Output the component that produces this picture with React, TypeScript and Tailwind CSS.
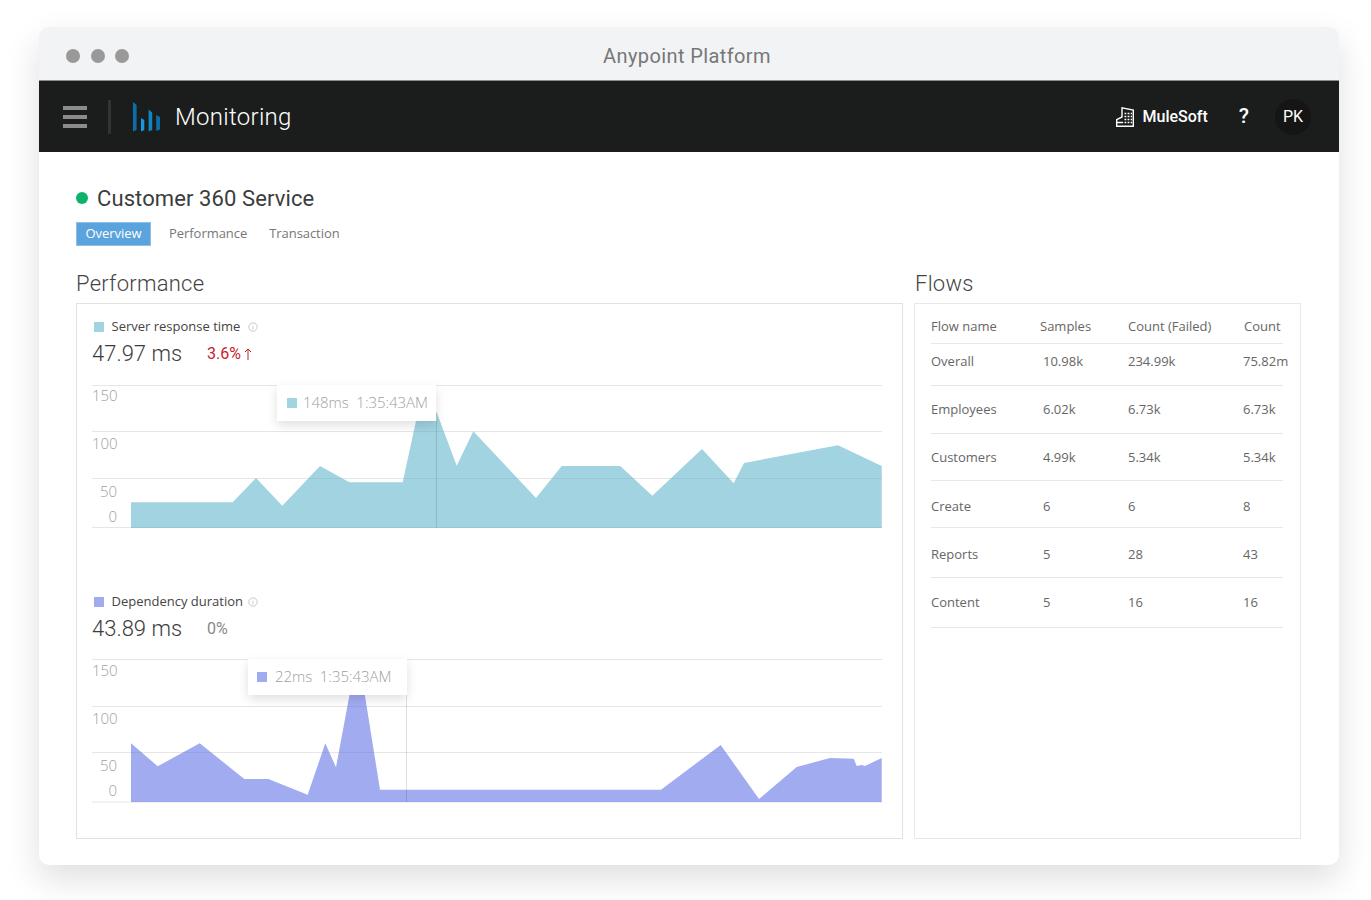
import React from 'react';

const din = "font-['Roboto',sans-serif]";
const body = "font-['Open_Sans',sans-serif]";

const serverPoints = '131,528 131,502.3 232.7,502.3 256,478 282.3,505.7 320,466 349.3,482.3 402.7,482.3 416,421 418,412 436.7,412.3 456.7,465.7 473.3,431.3 536,498 561.7,466 620.3,466 652.3,495.7 702,449 733.7,483.3 744,463 838,445.3 881.7,466 881.7,528';
const depPoints = '131,802 131,743.3 157.7,766.3 199.7,743.3 244.3,779 268.3,779 307.7,794.7 325.3,743.3 336,767.3 349.3,696 352,680 362,680 365,696 380,789.7 661,789.7 720.7,745 759,799 796.7,767 830,758 853.7,758.7 856.7,766 861.7,765 865,766 881.7,758 881.7,802';

function InfoIcon() {
  return (
    <svg width="10" height="10" viewBox="0 0 10 10" fill="none" stroke="#b5b5b5" strokeWidth="0.7">
      <circle cx="5" cy="5" r="4.2" />
      <path d="M5 4.2V7.5M5 2.5V3.3" />
    </svg>
  );
}

function UpArrow() {
  return (
    <svg className="ml-[3px]" width="8" height="12" viewBox="0 0 8 12" fill="none" stroke="#c8202d" strokeWidth="1">
      <path d="M4 12V1M1 4l3-3 3 3" />
    </svg>
  );
}

function ChartSection({
  label,
  value,
  delta,
  swatch,
  points,
  top,
  grid,
  cursor,
  axis,
  tip,
  tipClass,
  chartClass,
}: {
  label: string;
  value: string;
  delta: React.ReactNode;
  swatch: string;
  points: string;
  top: number;
  grid: number[];
  cursor: number;
  axis: number[];
  tip: string;
  tipClass: string;
  chartClass: string;
}) {
  const clipId = `area-${top}`;
  return (
    <div>
      <div className={`flex h-[18px] items-center pl-[2px] text-[13px] text-[#444] ${body}`}>
        <span className="h-[10px] w-[10px]" style={{ backgroundColor: swatch }} />
        <span className="ml-[7.5px] w-[136.5px]">{label}</span>
        <InfoIcon />
      </div>
      <div className={`mt-[3px] flex h-[28px] items-center ${din}`}>
        <span className="w-[115px] text-[22px] font-light text-[#3c3c3c]">{value}</span>
        <span className="flex items-center pt-[1px]">{delta}</span>
      </div>
      <div className={`relative h-[145px] w-[790px] ${chartClass}`}>
        <svg className="absolute inset-0" width="790" height="145" viewBox={`92 ${top} 790 145`}>
          <clipPath id={clipId}>
            <polygon points={points} />
          </clipPath>
          {grid.map((y) => (
            <line key={y} x1="92" x2="882" y1={y} y2={y} stroke="#e6e6e6" />
          ))}
          <polygon points={points} fill={swatch} />
          <g clipPath={`url(#${clipId})`}>
            {grid.map((y) => (
              <line key={y} x1="131" x2="882" y1={y} y2={y} stroke="#000" strokeOpacity="0.05" />
            ))}
          </g>
          <line x1={cursor} x2={cursor} y1={top + 36} y2={grid[3]} stroke="#000" strokeOpacity="0.12" />
        </svg>
        {axis.map((y, i) => (
          <span
            key={i}
            className={`absolute left-0 w-[25px] text-right text-[15px] leading-[20px] font-light text-[#a0a0a0] ${body}`}
            style={{ top: y }}
          >
            {['150', '100', '50', '0'][i]}
          </span>
        ))}
        <div
          className={`absolute top-0 flex h-[36px] w-[159px] items-center bg-white pb-[1px] text-[15px] font-light tracking-[-0.05px] whitespace-pre text-[#a0a0a0] shadow-[0_4px_10px_rgba(0,0,0,0.13)] ${body} ${tipClass}`}
        >
          <span className="h-[10px] w-[10px]" style={{ backgroundColor: swatch }} />
          {tip}
        </div>
      </div>
    </div>
  );
}

const rows = [
  { name: 'Overall', samples: '10.98k', failed: '234.99k', count: '75.82m', h: 'h-[42px] pb-[6px]' },
  { name: 'Employees', samples: '6.02k', failed: '6.73k', count: '6.73k', h: 'h-[48px]' },
  { name: 'Customers', samples: '4.99k', failed: '5.34k', count: '5.34k', h: 'h-[47px] pt-[2px]' },
  { name: 'Create', samples: '6', failed: '6', count: '8', h: 'h-[47px] pt-[5px]' },
  { name: 'Reports', samples: '5', failed: '28', count: '43', h: 'h-[50px] pt-[4px]' },
  { name: 'Content', samples: '5', failed: '16', count: '16', h: 'h-[50px]' },
];

export default function App() {
  return (
    <div className="h-[900px] w-full overflow-hidden bg-white pt-[27px] pl-[39px]">
      <div className="h-[838px] w-[1300px] overflow-hidden rounded-[10px] bg-white shadow-[0_14px_34px_rgba(0,0,0,0.13)]">
        {/* window chrome */}
        <div className="flex h-[54px] items-center border-b border-[#8c8e8d] bg-[#f2f3f5] pt-[4px] pl-[27px]">
          <div className="flex gap-[10.5px]">
            <span className="h-[14px] w-[14px] rounded-full bg-[#999]" />
            <span className="h-[14px] w-[14px] rounded-full bg-[#999]" />
            <span className="h-[14px] w-[14px] rounded-full bg-[#999]" />
          </div>
          <div className={`flex-1 pr-[94px] text-center text-[20px] tracking-[0.4px] text-[#777] ${din}`}>Anypoint Platform</div>
        </div>

        {/* nav */}
        <div className="flex h-[71px] items-center bg-[#1b1d1c] pr-[28px] pl-[24px] text-white">
          <div className="flex w-[24px] flex-col gap-[5px]">
            <span className="h-[4px] bg-[#8b8b8b]" />
            <span className="h-[4px] bg-[#8b8b8b]" />
            <span className="h-[4px] bg-[#8b8b8b]" />
          </div>
          <span className="mr-[22px] ml-[21px] h-[34px] w-[3px] bg-[#333]" />
          <svg width="28" height="30" viewBox="0 0 28 30">
            <polygon points="0,0 3.6,3 3.6,28 0,29.5" fill="#0c6ea8" />
            <polygon points="8,16 11.3,18 11.3,28 8,29.5" fill="#139ae2" />
            <polygon points="15.6,7.5 19.2,10.5 19.2,28 15.6,29.5" fill="#0f86c8" />
            <polygon points="23.2,13 27,15 27,27.5 23.2,29" fill="#0c6ea8" />
          </svg>
          <span className={`ml-[14px] text-[24px] font-light tracking-[0.3px] ${din}`}>Monitoring</span>
          <div className="flex-1" />
          <svg width="18" height="20" viewBox="0 0 18 20" fill="none" stroke="#fff" strokeWidth="1.4">
            <path d="M6 10V.9L17.3 3V19.3H.7V12.6L6 10Z" />
            <path d="M.7 15.5h6.4" />
            <path d="M8.5 6.5h1.8M11.6 6.5h1.8M14.7 6.5h1.4M8.5 9.5h1.8M11.6 9.5h1.8M14.7 9.5h1.4M8.5 12.5h1.8M11.6 12.5h1.8M14.7 12.5h1.4M8.5 15.5h1.8M11.6 15.5h1.8M14.7 15.5h1.4" strokeWidth="1.6" />
          </svg>
          <span className={`ml-[9px] text-[16px] font-medium ${din}`}>MuleSoft</span>
          <span className={`ml-[31px] text-[21px] font-medium ${din}`}>?</span>
          <span className={`ml-[26px] flex h-[36px] w-[36px] items-center justify-center rounded-full bg-[#141514] text-[16px] ${din}`}>PK</span>
        </div>

        {/* content */}
        <div className="px-[37px] pt-[33px]">
          <div className="flex h-[26px] items-center">
            <span className="h-[12px] w-[12px] rounded-full bg-[#0db36b]" />
            <h1 className={`ml-[9px] text-[22px] tracking-[0.1px] text-[#3c3c3c] ${din}`}>Customer 360 Service</h1>
          </div>
          <div className={`mt-[11px] flex h-[24px] items-center text-[13px] tracking-[-0.05px] text-[#777] ${body}`}>
            <span className="flex h-[24px] w-[75px] items-center justify-center border border-[#8fc0e8] bg-[#5ba3dc] text-white">Overview</span>
            <span className="ml-[18px]">Performance</span>
            <span className="ml-[22px]">Transaction</span>
          </div>

          <div className="mt-[24px] flex">
            <div className="w-[827px]">
              <h2 className={`h-[28px] text-[22px] leading-[28px] font-light tracking-[0.25px] text-[#444] ${din}`}>Performance</h2>
              <div className="mt-[5px] h-[536px] border border-[#e2e2e2] px-[15px] pt-[14px]">
                <ChartSection
                  label="Server response time"
                  value="47.97 ms"
                  delta={<><span className="text-[16px] text-[#c8202d]">3.6%</span><UpArrow /></>}
                  swatch="#a1d3e1"
                  points={serverPoints}
                  top={385}
                  grid={[385.5, 431.5, 478.5, 527.5]}
                  cursor={436.5}
                  axis={[0, 48, 96, 121]}
                  tip="148ms  1:35:43AM"
                  tipClass="left-[185px] gap-[6px] pl-[10px]"
                  chartClass="mt-[18px]"
                />
                <div className="h-[63px]" />
                <ChartSection
                  label="Dependency duration"
                  value="43.89 ms"
                  delta={<span className="text-[16px] text-[#888]">0%</span>}
                  swatch="#a1abf0"
                  points={depPoints}
                  top={659}
                  grid={[659.5, 706.5, 752.5, 802]}
                  cursor={406.5}
                  axis={[1, 49, 96, 121]}
                  tip="22ms  1:35:43AM"
                  tipClass="left-[156px] gap-[8px] pl-[9px]"
                  chartClass="mt-[17px]"
                />
              </div>
            </div>

            <div className="ml-[11px] w-[387px]">
              <h2 className={`h-[28px] pl-[1px] text-[22px] leading-[28px] font-light tracking-[0.25px] text-[#444] ${din}`}>Flows</h2>
              <div className={`mt-[5px] h-[536px] border border-[#e8e8e8] pr-[17px] pl-[16px] text-[13px] text-[#666] ${body}`}>
                <div className="grid h-[40px] grid-cols-[109px_88px_116px_1fr] items-center border-b border-[#e8e8e8] pt-[6px]">
                  <span>Flow name</span>
                  <span>Samples</span>
                  <span>Count (Failed)</span>
                  <span>Count</span>
                </div>
                {rows.map((r) => (
                  <div key={r.name} className={`grid grid-cols-[109px_88px_116px_1fr] items-center border-b border-[#e8e8e8] whitespace-nowrap ${r.h}`}>
                    <span>{r.name}</span>
                    <span className="pl-[3px]">{r.samples}</span>
                    <span>{r.failed}</span>
                    <span className="-ml-[1px]">{r.count}</span>
                  </div>
                ))}
              </div>
            </div>
          </div>
        </div>
      </div>
    </div>
  );
}
